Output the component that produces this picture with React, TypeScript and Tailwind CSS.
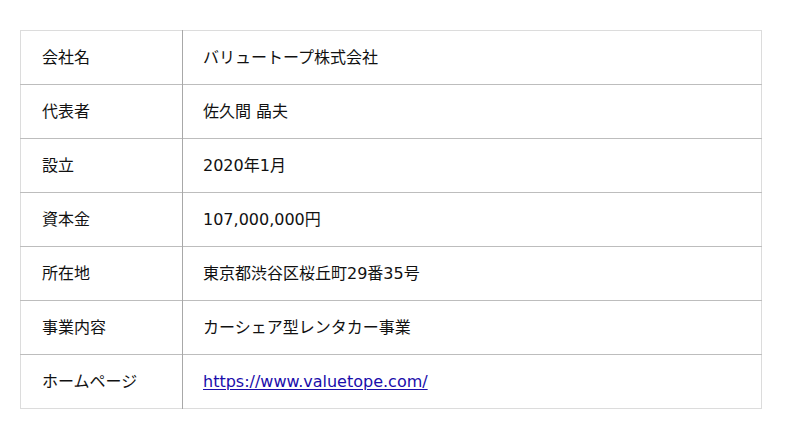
import React from "react";

const rows: { label: string; value: React.ReactNode }[] = [
  { label: "会社名", value: "バリュートープ株式会社" },
  { label: "代表者", value: "佐久間 晶夫" },
  { label: "設立", value: "2020年1月" },
  { label: "資本金", value: "107,000,000円" },
  { label: "所在地", value: "東京都渋谷区桜丘町29番35号" },
  { label: "事業内容", value: "カーシェア型レンタカー事業" },
  {
    label: "ホームページ",
    value: (
      <a href="#" className="text-[#1a0dab] underline underline-offset-2">
        https://www.valuetope.com/
      </a>
    ),
  },
];

export default function App() {
  return (
    <div
      className="h-[439px] w-[800px] bg-white px-5 pt-[30px] text-base text-[#111]"
      style={{ fontFamily: '"DejaVu Sans", "Noto Sans CJK JP", sans-serif' }}
    >
      <table className="w-[742px] border-collapse border border-[#dcdcdc]">
        <tbody>
          {rows.map((r, i) => (
            <tr
              key={r.label}
              className={i > 0 ? "border-t border-[#bdbdbd]" : ""}
            >
              <td className="h-[54px] w-[162px] border-r border-[#a8a8a8] pl-[21px] align-middle">
                {r.label}
              </td>
              <td className="h-[54px] pl-5 align-middle">{r.value}</td>
            </tr>
          ))}
        </tbody>
      </table>
    </div>
  );
}
